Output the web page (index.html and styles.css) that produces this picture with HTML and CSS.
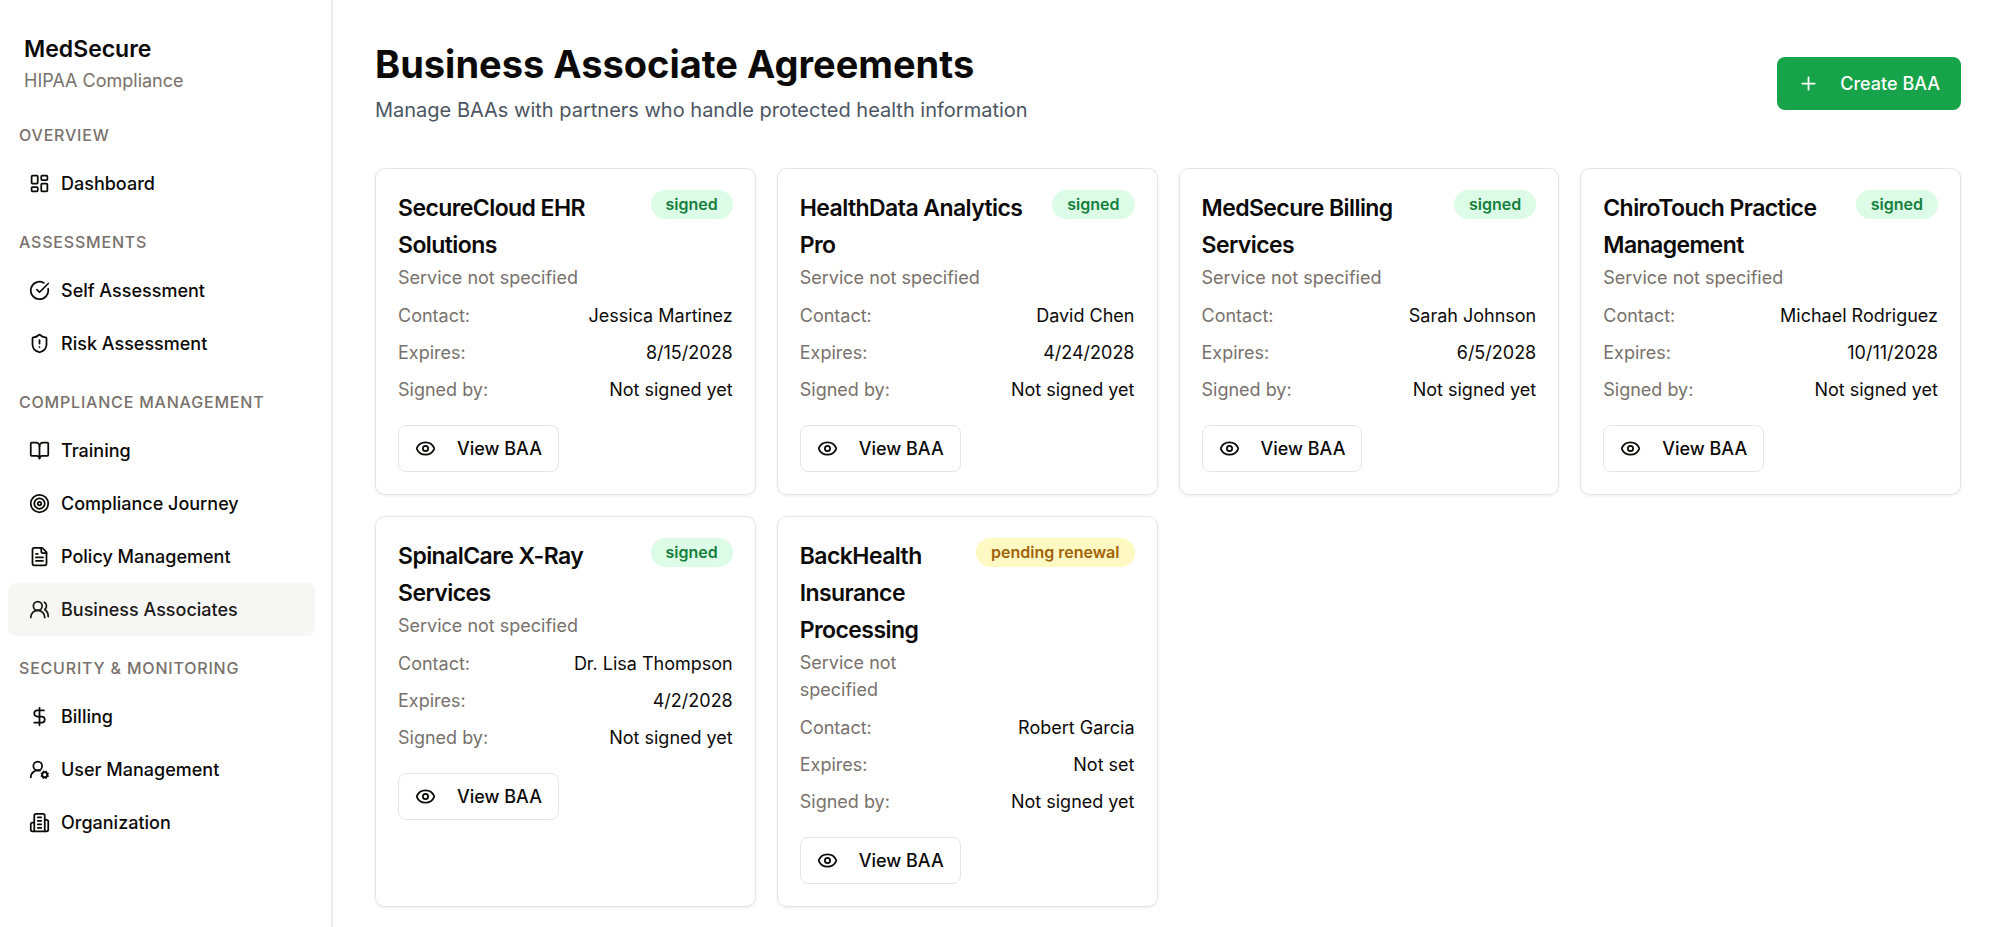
FILE: index.html
```
<!DOCTYPE html>
<html lang="en">
<head>
  <meta charset="UTF-8" />
  <meta name="viewport" content="width=device-width, initial-scale=1.0"/>
  <title>Business Associate Agreements - MedSecure</title>
  <link rel="stylesheet" href="styles.css">
</head>
<body>
  <!-- icon set -->
  <svg class="sprite" aria-hidden="true">
    <symbol id="i-dashboard" viewBox="0 0 24 24"><rect width="7" height="9" x="3" y="3" rx="1"/><rect width="7" height="5" x="14" y="3" rx="1"/><rect width="7" height="9" x="14" y="12" rx="1"/><rect width="7" height="5" x="3" y="16" rx="1"/></symbol>
    <symbol id="i-check" viewBox="0 0 24 24"><path d="M21.801 10A10 10 0 1 1 17 3.335"/><path d="m9 11 3 3L22 4"/></symbol>
    <symbol id="i-shield" viewBox="0 0 24 24"><path d="M20 13c0 5-3.5 7.5-7.66 8.95a1 1 0 0 1-.67-.01C7.5 20.5 4 18 4 13V6a1 1 0 0 1 1-1c2 0 4.5-1.2 6.24-2.72a1.17 1.17 0 0 1 1.52 0C14.51 3.81 17 5 19 5a1 1 0 0 1 1 1z"/><path d="M12 8v4"/><path d="M12 16h.01"/></symbol>
    <symbol id="i-book" viewBox="0 0 24 24"><path d="M12 7v14"/><path d="M3 18a1 1 0 0 1-1-1V4a1 1 0 0 1 1-1h5a4 4 0 0 1 4 4 4 4 0 0 1 4-4h5a1 1 0 0 1 1 1v13a1 1 0 0 1-1 1h-6a3 3 0 0 0-3 3 3 3 0 0 0-3-3z"/></symbol>
    <symbol id="i-target" viewBox="0 0 24 24"><circle cx="12" cy="12" r="10"/><circle cx="12" cy="12" r="6"/><circle cx="12" cy="12" r="2"/></symbol>
    <symbol id="i-file" viewBox="0 0 24 24"><path d="M15 2H6a2 2 0 0 0-2 2v16a2 2 0 0 0 2 2h12a2 2 0 0 0 2-2V7Z"/><path d="M14 2v4a2 2 0 0 0 2 2h4"/><path d="M10 9H8"/><path d="M16 13H8"/><path d="M16 17H8"/></symbol>
    <symbol id="i-users" viewBox="0 0 24 24"><path d="M18 21a8 8 0 0 0-16 0"/><circle cx="10" cy="8" r="5"/><path d="M22 20c0-3.37-2-6.5-4-8a5 5 0 0 0-.45-8.3"/></symbol>
    <symbol id="i-dollar" viewBox="0 0 24 24"><path d="M12 2v20"/><path d="M17 5H9.5a3.5 3.5 0 0 0 0 7h5a3.5 3.5 0 0 1 0 7H6"/></symbol>
    <symbol id="i-usercog" viewBox="0 0 24 24"><path d="M2 21a8 8 0 0 1 10.434-7.62"/><circle cx="10" cy="8" r="5"/><circle cx="18" cy="18" r="3"/><path d="m19.5 14.3-.4.9"/><path d="m16.9 20.8-.4.9"/><path d="m21.7 19.5-.9-.4"/><path d="m15.2 16.9-.9-.4"/><path d="m21.7 16.5-.9.4"/><path d="m15.2 19.1-.9.4"/><path d="m19.5 21.7-.4-.9"/><path d="m16.9 15.2-.4-.9"/></symbol>
    <symbol id="i-building" viewBox="0 0 24 24"><path d="M6 22V4a2 2 0 0 1 2-2h8a2 2 0 0 1 2 2v18Z"/><path d="M6 12H4a2 2 0 0 0-2 2v6a2 2 0 0 0 2 2h2"/><path d="M18 9h2a2 2 0 0 1 2 2v9a2 2 0 0 1-2 2h-2"/><path d="M10 6h4"/><path d="M10 10h4"/><path d="M10 14h4"/><path d="M10 18h4"/></symbol>
    <symbol id="i-plus" viewBox="0 0 24 24"><path d="M5 12h14"/><path d="M12 5v14"/></symbol>
    <symbol id="i-eye" viewBox="0 0 24 24"><path d="M2.062 12.348a1 1 0 0 1 0-.696 10.75 10.75 0 0 1 19.876 0 1 1 0 0 1 0 .696 10.75 10.75 0 0 1-19.876 0"/><circle cx="12" cy="12" r="3"/></symbol>
  </svg>

  <div class="layout">
    <aside class="sidebar">
      <div class="brand">
        <h2>MedSecure</h2>
        <p>HIPAA Compliance</p>
      </div>
      <nav>
        <h3>Overview</h3>
        <a href="#"><svg class="icon"><use href="#i-dashboard"/></svg>Dashboard</a>
        <h3>Assessments</h3>
        <a href="#"><svg class="icon"><use href="#i-check"/></svg>Self Assessment</a>
        <a href="#"><svg class="icon"><use href="#i-shield"/></svg>Risk Assessment</a>
        <h3>Compliance Management</h3>
        <a href="#"><svg class="icon"><use href="#i-book"/></svg>Training</a>
        <a href="#"><svg class="icon"><use href="#i-target"/></svg>Compliance Journey</a>
        <a href="#"><svg class="icon"><use href="#i-file"/></svg>Policy Management</a>
        <a href="#" class="active"><svg class="icon"><use href="#i-users"/></svg>Business Associates</a>
        <h3>Security &amp; Monitoring</h3>
        <a href="#"><svg class="icon"><use href="#i-dollar"/></svg>Billing</a>
        <a href="#"><svg class="icon"><use href="#i-usercog"/></svg>User Management</a>
        <a href="#"><svg class="icon"><use href="#i-building"/></svg>Organization</a>
      </nav>
    </aside>

    <main>
      <header class="page-header">
        <div>
          <h1>Business Associate Agreements</h1>
          <p>Manage BAAs with partners who handle protected health information</p>
        </div>
        <button type="button" class="btn btn-create"><svg class="icon"><use href="#i-plus"/></svg>Create BAA</button>
      </header>

      <div class="cards">
        <article class="card">
          <div class="card-head">
            <div>
              <h2>SecureCloud EHR Solutions</h2>
              <p>Service not specified</p>
            </div>
            <span class="badge signed">signed</span>
          </div>
          <dl>
            <div><dt>Contact:</dt><dd>Jessica Martinez</dd></div>
            <div><dt>Expires:</dt><dd>8/15/2028</dd></div>
            <div><dt>Signed by:</dt><dd>Not signed yet</dd></div>
          </dl>
          <button type="button" class="btn btn-view"><svg class="icon"><use href="#i-eye"/></svg>View BAA</button>
        </article>

        <article class="card">
          <div class="card-head">
            <div>
              <h2>HealthData Analytics Pro</h2>
              <p>Service not specified</p>
            </div>
            <span class="badge signed">signed</span>
          </div>
          <dl>
            <div><dt>Contact:</dt><dd>David Chen</dd></div>
            <div><dt>Expires:</dt><dd>4/24/2028</dd></div>
            <div><dt>Signed by:</dt><dd>Not signed yet</dd></div>
          </dl>
          <button type="button" class="btn btn-view"><svg class="icon"><use href="#i-eye"/></svg>View BAA</button>
        </article>

        <article class="card">
          <div class="card-head">
            <div>
              <h2>MedSecure Billing Services</h2>
              <p>Service not specified</p>
            </div>
            <span class="badge signed">signed</span>
          </div>
          <dl>
            <div><dt>Contact:</dt><dd>Sarah Johnson</dd></div>
            <div><dt>Expires:</dt><dd>6/5/2028</dd></div>
            <div><dt>Signed by:</dt><dd>Not signed yet</dd></div>
          </dl>
          <button type="button" class="btn btn-view"><svg class="icon"><use href="#i-eye"/></svg>View BAA</button>
        </article>

        <article class="card">
          <div class="card-head">
            <div>
              <h2>ChiroTouch Practice Management</h2>
              <p>Service not specified</p>
            </div>
            <span class="badge signed">signed</span>
          </div>
          <dl>
            <div><dt>Contact:</dt><dd>Michael Rodriguez</dd></div>
            <div><dt>Expires:</dt><dd>10/11/2028</dd></div>
            <div><dt>Signed by:</dt><dd>Not signed yet</dd></div>
          </dl>
          <button type="button" class="btn btn-view"><svg class="icon"><use href="#i-eye"/></svg>View BAA</button>
        </article>

        <article class="card">
          <div class="card-head">
            <div>
              <h2>SpinalCare X-Ray Services</h2>
              <p>Service not specified</p>
            </div>
            <span class="badge signed">signed</span>
          </div>
          <dl>
            <div><dt>Contact:</dt><dd>Dr. Lisa Thompson</dd></div>
            <div><dt>Expires:</dt><dd>4/2/2028</dd></div>
            <div><dt>Signed by:</dt><dd>Not signed yet</dd></div>
          </dl>
          <button type="button" class="btn btn-view"><svg class="icon"><use href="#i-eye"/></svg>View BAA</button>
        </article>

        <article class="card">
          <div class="card-head">
            <div>
              <h2>BackHealth Insurance Processing</h2>
              <p>Service not specified</p>
            </div>
            <span class="badge pending">pending renewal</span>
          </div>
          <dl>
            <div><dt>Contact:</dt><dd>Robert Garcia</dd></div>
            <div><dt>Expires:</dt><dd>Not set</dd></div>
            <div><dt>Signed by:</dt><dd>Not signed yet</dd></div>
          </dl>
          <button type="button" class="btn btn-view"><svg class="icon"><use href="#i-eye"/></svg>View BAA</button>
        </article>
      </div>
    </main>
  </div>
</body>
</html>
```
FILE: styles.css
```
* {
  box-sizing: border-box;
}
body {
  margin: 0;
  font-family: Inter, "Liberation Sans", sans-serif;
  font-size: 18px;
  line-height: 27px;
  color: #0c0a09;
  background: #fff;
}
h1, h2, h3, p, dl, dd {
  margin: 0;
}
.sprite {
  display: none;
}
.icon {
  width: 21px;
  height: 21px;
  flex-shrink: 0;
  fill: none;
  stroke: currentColor;
  stroke-width: 2;
  stroke-linecap: round;
  stroke-linejoin: round;
}
.layout {
  display: flex;
  min-height: 100vh;
}

/* Sidebar */
.sidebar {
  width: 333px;
  flex-shrink: 0;
  padding: 33px 16px 0 8px;
  border-right: 2px solid #ebebea;
}
.brand {
  padding: 0 16px 6px;
}
.brand h2 {
  font-size: 23px;
  font-weight: 600;
  line-height: 32px;
}
.brand p {
  line-height: 32px;
  color: #78716c;
}
.sidebar h3 {
  padding: 22px 11px 11px;
  font-size: 16px;
  font-weight: 500;
  line-height: 21px;
  letter-spacing: 0.05em;
  text-transform: uppercase;
  color: #78716c;
}
.sidebar a {
  display: flex;
  align-items: center;
  gap: 11px;
  padding: 13px 21px;
  border-radius: 8px;
  font-weight: 500;
  color: inherit;
  text-decoration: none;
}
.sidebar a.active {
  background: #f6f6f5;
  color: #1c1917;
}

/* Main content */
main {
  flex: 1;
  padding: 40px 39px 18px 42px;
}
.page-header {
  display: flex;
  justify-content: space-between;
  align-items: center;
  margin-bottom: 42px;
}
.page-header h1 {
  margin-bottom: 6px;
  font-size: 38px;
  font-weight: 700;
  line-height: 48px;
}
.page-header p {
  font-size: 20px;
  line-height: 32px;
  color: #4b5563;
}
.btn {
  display: inline-flex;
  align-items: center;
  gap: 21px;
  border: none;
  border-radius: 8px;
  font: inherit;
  font-weight: 500;
  cursor: pointer;
}
.btn-create {
  padding: 13px 21px;
  background: #16a34a;
  color: #fff;
}
.btn-view {
  margin-top: 22px;
  padding: 9px 16px;
  border: 1px solid #e7e5e4;
  background: #fff;
  color: inherit;
}

/* Agreement cards */
.cards {
  display: grid;
  grid-template-columns: repeat(4, 1fr);
  gap: 21px;
}
.card {
  padding: 21px 22px 22px;
  border: 1px solid #e7e5e4;
  border-radius: 10px;
  box-shadow: 0 1px 3px rgba(0, 0, 0, 0.08);
}
.card-head {
  display: flex;
  justify-content: space-between;
  align-items: flex-start;
  margin-bottom: 11px;
}
.card-head h2 {
  font-size: 23px;
  font-weight: 600;
  line-height: 37px;
  letter-spacing: -0.025em;
}
.card-head p {
  color: #78716c;
}
.badge {
  flex-shrink: 0;
  padding: 4px 15px;
  border-radius: 15px;
  font-size: 16px;
  font-weight: 600;
  line-height: 21px;
}
.badge.signed {
  background: #dcfce7;
  color: #15803d;
}
.badge.pending {
  background: #fef9c3;
  color: #a16207;
}
dl {
  display: grid;
  gap: 10px;
}
dl div {
  display: flex;
  justify-content: space-between;
}
dt {
  color: #78716c;
}
```
